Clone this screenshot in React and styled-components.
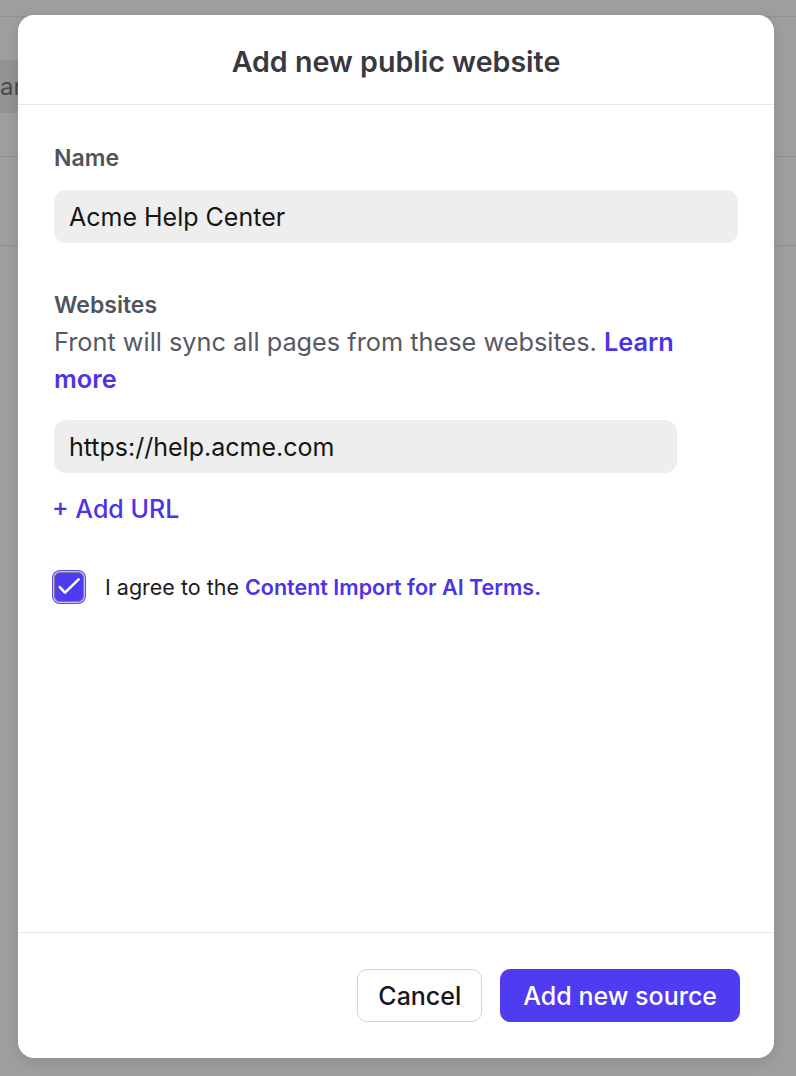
import React, { useState } from "react";
import styled, { createGlobalStyle } from "styled-components";

const GlobalStyle = createGlobalStyle`
  html, body {
    margin: 0;
    padding: 0;
    height: 100%;
  }
  body {
    font-family: Inter, "Noto Sans", "Liberation Sans", sans-serif;
    background: #9f9ea1;
    -webkit-font-smoothing: antialiased;
  }
`;

const Page = styled.div`
  position: relative;
  width: 796px;
  height: 1076px;
  overflow: hidden;
  background: #9f9ea1;
`;

const PageHeader = styled.div`
  height: 16px;
  border-bottom: 1px solid #929195;
`;

const PageTab = styled.div`
  margin-top: 43px;
  height: 53px;
  width: 60px;
  background: #949396;
  display: flex;
  align-items: center;
  font-size: 24px;
  color: #4a494f;
  overflow: hidden;
  white-space: nowrap;
`;

const PageRow = styled.div`
  height: ${(p) => p.$h}px;
  border-bottom: 1px solid #8f8e92;
`;

const Overlay = styled.div`
  position: absolute;
  inset: 0;
  display: flex;
  padding: 15px 22px 18px 18px;
`;

const Modal = styled.div`
  flex: 1;
  background: #ffffff;
  border-radius: 16px;
  box-shadow: 0 4px 18px rgba(0, 0, 0, 0.12);
  display: flex;
  flex-direction: column;
  overflow: hidden;
`;

const Header = styled.div`
  height: 90px;
  padding-top: 4px;
  display: flex;
  align-items: center;
  justify-content: center;
  border-bottom: 1px solid #e7e4f2;
  box-sizing: border-box;
`;

const Title = styled.h2`
  margin: 0;
  font-size: 28.6px;
  font-weight: 600;
  color: #393841;
`;

const Body = styled.div`
  flex: 1;
  padding: 39px 36px 0;
  display: flex;
  flex-direction: column;
`;

const Label = styled.div`
  font-size: 23px;
  line-height: 28px;
  font-weight: 600;
  color: #51535c;
  margin-top: ${(p) => p.$top || 0}px;
`;

const TextInput = styled.input`
  box-sizing: border-box;
  width: ${(p) => p.$width || "100%"};
  height: 53px;
  flex-shrink: 0;
  border: none;
  outline: none;
  border-radius: 12px;
  background: #eeeeee;
  padding: 0 15px;
  font-family: inherit;
  font-size: 25px;
  color: #151515;
  margin-top: ${(p) => p.$top || 0}px;
`;

const Description = styled.p`
  margin: 4px 0 0;
  font-size: 25.3px;
  line-height: 37px;
  color: #575963;
`;

const Link = styled.a`
  color: #4b34e6;
  font-weight: 600;
  text-decoration: none;
  cursor: pointer;
`;

const AddUrl = styled.button`
  align-self: flex-start;
  margin: 21px 0 0 -2px;
  padding: 0;
  border: none;
  background: none;
  font-family: inherit;
  font-size: 25px;
  line-height: 30px;
  font-weight: 500;
  color: #4b34e6;
  cursor: pointer;
`;

const AgreeRow = styled.label`
  display: flex;
  align-items: center;
  gap: 21px;
  margin-top: 48px;
  font-size: 21.5px;
  line-height: 30px;
  color: #1b1b1f;
  cursor: pointer;
`;

const CheckBox = styled.span`
  box-sizing: border-box;
  width: 30px;
  height: 30px;
  flex-shrink: 0;
  border-radius: 6px;
  border: 1.5px solid #7d7c92;
  background: ${(p) => (p.$checked ? "#4f3cf0" : "#fff")};
  box-shadow: 0 0 0 1px #c9c2fb, 0 0 0 2px #5a48f0;
  display: flex;
  align-items: center;
  justify-content: center;

  svg {
    flex-shrink: 0;
  }
`;

const AgreeLink = styled.span`
  color: #4b34e6;
  font-weight: 600;
`;

const Footer = styled.div`
  height: 126px;
  box-sizing: border-box;
  border-top: 1px solid #e7e5ee;
  display: flex;
  align-items: center;
  justify-content: flex-end;
  gap: 18px;
  padding: 0 34px 0 0;
`;

const Button = styled.button`
  height: 53px;
  box-sizing: border-box;
  padding: 0 ${(p) => (p.$primary ? 22 : 20)}px;
  border-radius: 10px;
  font-family: inherit;
  font-size: 25px;
  font-weight: 500;
  cursor: pointer;
  border: 1px solid ${(p) => (p.$primary ? "#4f3cf0" : "#d3d3d8")};
  background: ${(p) => (p.$primary ? "#4f3cf0" : "#ffffff")};
  color: ${(p) => (p.$primary ? "#ffffff" : "#17171b")};
`;

export default function App() {
  const [agreed, setAgreed] = useState(true);

  return (
    <Page>
      <GlobalStyle />
      <PageHeader />
      <PageTab>ar</PageTab>
      <PageRow $h={43} />
      <PageRow $h={88} />

      <Overlay>
        <Modal>
          <Header>
            <Title>Add new public website</Title>
          </Header>

          <Body>
            <Label>Name</Label>
            <TextInput $top={18} defaultValue="Acme Help Center" />

            <Label $top={48}>Websites</Label>
            <Description>
              Front will sync all pages from these websites. <Link>Learn more</Link>
            </Description>
            <TextInput $top={23} $width="623px" defaultValue="https://help.acme.com" />

            <AddUrl type="button">+ Add URL</AddUrl>

            <AgreeRow onClick={() => setAgreed(!agreed)}>
              <CheckBox $checked={agreed}>
                {agreed && (
                  <svg width="24" height="24" viewBox="0 0 24 24" fill="none">
                    <path d="M2.8 12.2l5.2 5.4L21.6 4.4" stroke="#fff" strokeWidth="2.6" strokeLinecap="round" strokeLinejoin="round" />
                  </svg>
                )}
              </CheckBox>
              <span>
                I agree to the <AgreeLink>Content Import for AI Terms.</AgreeLink>
              </span>
            </AgreeRow>
          </Body>

          <Footer>
            <Button type="button">Cancel</Button>
            <Button type="button" $primary>Add new source</Button>
          </Footer>
        </Modal>
      </Overlay>
    </Page>
  );
}
